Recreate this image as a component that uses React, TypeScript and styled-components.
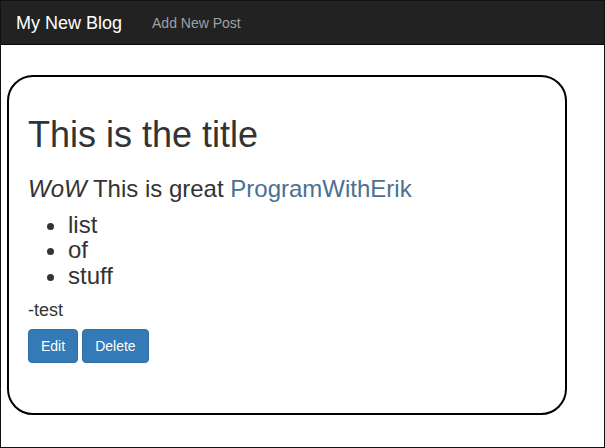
import React from "react";
import styled, { createGlobalStyle } from "styled-components";

const Global = createGlobalStyle`
  html, body { margin: 0; padding: 0; background: #fff; }
  body { font-family: "Liberation Sans", Arial, sans-serif; font-size: 14px; color: #333; }
  * { box-sizing: border-box; }
`;

const Frame = styled.div`
  width: 605px;
  height: 448px;
  border: 1px solid #111;
  overflow: hidden;
  display: flex;
  flex-direction: column;
`;

const NavBar = styled.nav`
  height: 44px;
  background: #222;
  border-bottom: 1px solid #080808;
  display: flex;
  align-items: center;
  padding-left: 15px;
  flex-shrink: 0;
`;

const Brand = styled.a`
  font-size: 18px;
  color: #fff;
  text-decoration: none;
  line-height: 20px;
`;

const NavLink = styled.a`
  font-size: 14px;
  color: #9da1a6;
  text-decoration: none;
  margin-left: 30px;
  line-height: 20px;
  margin-top: 1px;
`;

const Main = styled.main`
  padding: 30px 0 0 6px;
`;

const Card = styled.article`
  width: 560px;
  height: 340px;
  border: 2px solid #000;
  border-radius: 26px;
  padding: 18px 20px 0 19px;
`;

const Title = styled.h1`
  font-size: 36px;
  font-weight: 400;
  line-height: 1.1;
  margin: 20px 0 21px;
  color: #333;
`;

const Lead = styled.p`
  font-size: 24px;
  line-height: 1.1;
  margin: 0 0 10px;
  em { font-style: italic; }
`;

const Link = styled.a`
  color: #4a7192;
  text-decoration: none;
`;

const List = styled.ul`
  font-size: 24px;
  line-height: 25.5px;
  margin: 0 0 12px;
  padding-left: 40px;
`;

const Author = styled.div`
  font-size: 18px;
  line-height: 20px;
  margin-bottom: 9px;
`;

const Actions = styled.div`
  display: flex;
  gap: 4px;
`;

const Button = styled.button`
  font-family: "Liberation Sans", Arial, sans-serif;
  font-size: 14px;
  line-height: 20px;
  padding: 6px 12px;
  color: #fff;
  background: #337ab7;
  border: 1px solid #2e6da4;
  border-radius: 4px;
  height: 34px;
  cursor: pointer;
`;

export default function App() {
  return (
    <>
      <Global />
      <Frame>
        <NavBar>
          <Brand href="#">My New Blog</Brand>
          <NavLink href="#">Add New Post</NavLink>
        </NavBar>
        <Main>
          <Card>
            <Title>This is the title</Title>
            <Lead>
              <em>WoW</em> This is great <Link href="#">ProgramWithErik</Link>
            </Lead>
            <List>
              <li>list</li>
              <li>of</li>
              <li>stuff</li>
            </List>
            <Author>-test</Author>
            <Actions>
              <Button>Edit</Button>
              <Button>Delete</Button>
            </Actions>
          </Card>
        </Main>
      </Frame>
    </>
  );
}
